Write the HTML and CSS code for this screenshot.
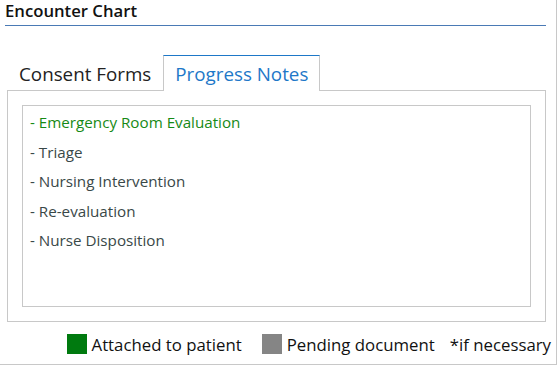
FILE: index.html
```html
<!DOCTYPE html>
<html lang="en">
<head>
  <meta charset="UTF-8" />
  <meta name="viewport" content="width=device-width, initial-scale=1.0"/>
  <title>Encounter Chart</title>
  <link rel="stylesheet" href="styles.css">
</head>
<body>
  <div class="chart">
    <div class="chart-title">Encounter Chart</div>

    <div class="tabs">
      <div class="tab">Consent Forms</div>
      <div class="tab active">Progress Notes</div>
      <div class="tab-fill"></div>
    </div>

    <div class="panel">
      <ul class="notes">
        <li class="done">- Emergency Room Evaluation</li>
        <li>- Triage</li>
        <li>- Nursing Intervention</li>
        <li>- Re-evaluation</li>
        <li>- Nurse Disposition</li>
      </ul>
    </div>

    <div class="legend">
      <span class="swatch attached"></span>
      <span class="legend-label">Attached to patient</span>
      <span class="swatch pending"></span>
      <span class="legend-label">Pending document</span>
      <span class="legend-note">*if necessary</span>
    </div>
  </div>
</body>
</html>
```

FILE: styles.css
```css
* {
  box-sizing: border-box;
}
body {
  margin: 0;
  font-family: "Open Sans", "Noto Sans", sans-serif;
  background: #fff;
  color: #111;
}
.chart {
  width: 557px;
  height: 365px;
  border-right: 1px solid #c8c8c8;
  border-bottom: 1px solid #c8c8c8;
}
.chart-title {
  margin: 0 10px 0 5px;
  height: 26px;
  border-bottom: 1px solid #4a7ab5;
  font-size: 16.7px;
  font-weight: 600;
  line-height: 22px;
  color: #111;
}
.tabs {
  display: flex;
  margin: 29px 10px 0 7px;
  height: 36px;
}
.tab {
  padding: 0 12px;
  font-size: 18.8px;
  line-height: 38px;
  color: #222;
  border-bottom: 1px solid #c8c8c8;
}
.tab.active {
  padding: 0 11px;
  color: #1e78c8;
  border: 1px solid #c8c8c8;
  border-top-color: #1e78c8;
  border-bottom: none;
  line-height: 36px;
}
.tab-fill {
  flex: 1;
  border-bottom: 1px solid #c8c8c8;
}
.panel {
  margin: 0 10px 0 7px;
  height: 231px;
  padding: 14px;
  border: 1px solid #c8c8c8;
  border-top: none;
}
.notes {
  list-style: none;
  margin: 0;
  height: 202px;
  padding: 2px 0 0 7px;
  border: 1px solid #c8c8c8;
  font-size: 15.2px;
  line-height: 29.5px;
  color: #394848;
}
.notes .done {
  color: #168a16;
}
.legend {
  display: flex;
  align-items: center;
  justify-content: flex-end;
  margin-top: 11px;
  padding-right: 5px;
  height: 22px;
  font-size: 16.8px;
}
.swatch {
  width: 20px;
  height: 20px;
  margin-right: 5px;
}
.swatch.attached { background: #007a0f; }
.swatch.pending { background: #858585; }
.legend-label {
  margin-right: 20px;
}
.legend-label + .legend-note {
  margin-left: -5px;
}
```
